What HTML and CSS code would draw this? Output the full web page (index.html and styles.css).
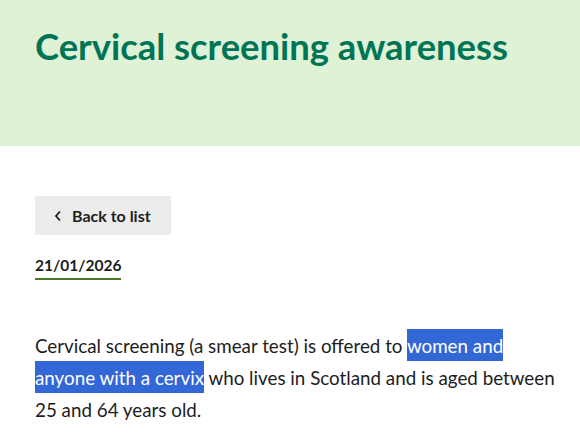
FILE: index.html
```html
<!DOCTYPE html>
<html lang="en">
<head>
    <meta charset="UTF-8">
    <meta name="viewport" content="width=device-width, initial-scale=1.0">
    <title>Cervical screening awareness</title>
    <link rel="stylesheet" href="styles.css">
</head>
<body>
    <header class="page-header">
        <h1>Cervical screening awareness</h1>
    </header>

    <main class="page-content">
        <a href="#" class="back-btn">
            <svg class="back-icon" width="8" height="12" viewBox="0 0 8 12" aria-hidden="true">
                <path d="M6 1.5 L2 6 L6 10.5" fill="none" stroke="currentColor" stroke-width="1.8"/>
            </svg>
            Back to list
        </a>

        <p class="post-date">21/01/2026</p>

        <p class="post-body">Cervical screening (a smear test) is offered to <span class="highlight">women and </span><span class="highlight">anyone with a cervix</span> who lives in Scotland and is aged between 25 and 64 years old.</p>
    </main>
</body>
</html>
```

FILE: styles.css
```css
body {
    margin: 0;
    font-family: Lato, 'Noto Sans', sans-serif;
    color: #1d1d1d;
    background: #fff;
}

.page-header {
    background: #dff2d6;
    height: 146px;
    padding: 0 35px;
    box-sizing: border-box;
    padding-top: 24px;
}

.page-header h1 {
    margin: 0;
    font-size: 36.4px;
    font-weight: 700;
    color: #007555;
    line-height: 44px;
}

.page-content {
    padding: 50px 10px 0 35px;
}

.back-btn {
    display: inline-flex;
    align-items: center;
    gap: 10px;
    height: 39px;
    padding: 0 20px 0 19px;
    background: #ececec;
    color: #1d1d1d;
    font-size: 16px;
    font-weight: 700;
    text-decoration: none;
}

.back-icon {
    display: block;
}

.post-date {
    width: fit-content;
    margin: 20px 0 0;
    font-size: 15.5px;
    font-weight: 700;
    line-height: 20px;
    padding-bottom: 3px;
    border-bottom: 2px solid #4a7a28;
}

.post-body {
    max-width: 520px;
    margin: 50px 0 0;
    font-size: 18.8px;
    line-height: 32px;
}

.highlight {
    background: #3367d6;
    color: #fff;
    padding: 5px 0 4px;
    -webkit-box-decoration-break: clone;
    box-decoration-break: clone;
}
```
